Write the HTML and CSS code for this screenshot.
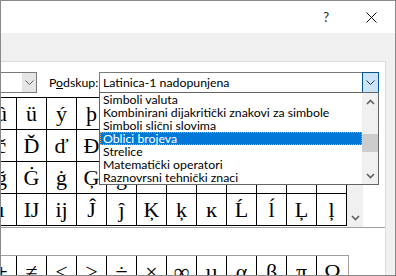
FILE: index.html
```html
<!DOCTYPE html>
<html lang="hr">
<head>
    <meta charset="UTF-8">
    <meta name="viewport" content="width=device-width, initial-scale=1.0">
    <title>Simbol</title>
    <link rel="stylesheet" href="styles.css">
</head>
<body>

<div class="window">
    <div class="titlebar">
        <span class="help">?</span>
        <span class="close">
            <svg width="11" height="11" viewBox="0 0 11 11"><path d="M0.5 0.5 L10.5 10.5 M10.5 0.5 L0.5 10.5" stroke="#111" stroke-width="1" fill="none"/></svg>
        </span>
    </div>

    <div class="content">
        <div class="panel">
            <div class="toolbar">
                <div class="font-combo">
                    <span class="font-btn">
                        <svg width="9" height="5" viewBox="0 0 9 5"><polyline points="0.5,0.5 4.5,4.5 8.5,0.5" stroke="#606060" stroke-width="1" fill="none"/></svg>
                    </span>
                </div>
                <label class="subset-label">P<u>o</u>dskup:</label>
                <div class="subset">
                    <div class="subset-combo">
                        <span class="subset-value">Latinica-1 nadopunjena</span>
                        <span class="subset-btn">
                            <svg width="9" height="5" viewBox="0 0 9 5"><polyline points="0.5,0.5 4.5,4.5 8.5,0.5" stroke="#303030" stroke-width="1" fill="none"/></svg>
                        </span>
                    </div>
                    <div class="subset-list">
                        <ul class="items">
                            <li>Simboli valuta</li>
                            <li>Kombinirani dijakritički znakovi za simbole</li>
                            <li>Simboli slični slovima</li>
                            <li class="selected">Oblici brojeva</li>
                            <li>Strelice</li>
                            <li>Matematički operatori</li>
                            <li>Raznovrsni tehnički znaci</li>
                        </ul>
                        <div class="list-scroll">
                            <span class="arrow">
                                <svg width="9" height="6" viewBox="0 0 9 6"><polyline points="1,5 4.5,1.5 8,5" stroke="#606060" stroke-width="1.6" fill="none"/></svg>
                            </span>
                            <span class="track"><span class="thumb"></span></span>
                            <span class="arrow">
                                <svg width="9" height="6" viewBox="0 0 9 6"><polyline points="1,1 4.5,4.5 8,1" stroke="#606060" stroke-width="1.6" fill="none"/></svg>
                            </span>
                        </div>
                    </div>
                </div>
            </div>

            <div class="chars">
                <div class="char-grid">
                    <span>û</span><span>ü</span><span>ý</span><span>þ</span><span>ÿ</span><span>Ā</span>
                    <span>ā</span><span>Ă</span><span>ă</span><span>Ą</span><span>ą</span><span>Ć</span>
                    <span>č</span><span>Ď</span><span>ď</span><span>Đ</span><span>đ</span><span>Ē</span>
                    <span>ē</span><span>Ĕ</span><span>ĕ</span><span>Ė</span><span>ė</span><span>Ę</span>
                    <span>ğ</span><span>Ġ</span><span>ġ</span><span>Ģ</span><span>ģ</span><span>Ĥ</span>
                    <span>ĥ</span><span>Ħ</span><span>ħ</span><span>Ĩ</span><span>ĩ</span><span>Ī</span>
                    <span>ı</span><span>Ĳ</span><span>ĳ</span><span>Ĵ</span><span>ĵ</span><span>Ķ</span>
                    <span>ķ</span><span>ĸ</span><span>Ĺ</span><span>ĺ</span><span>Ļ</span><span>ļ</span>
                </div>
                <div class="grid-scroll">
                    <svg width="9" height="6" viewBox="0 0 9 6"><polyline points="1,1 4.5,4.5 8,1" stroke="#606060" stroke-width="1.6" fill="none"/></svg>
                </div>
            </div>

            <div class="recent">
                <span>±</span><span>≠</span><span>≤</span><span>≥</span><span>÷</span><span>×</span>
                <span>∞</span><span>µ</span><span>α</span><span>β</span><span>π</span><span>Ω</span>
            </div>
        </div>
    </div>
</div>

</body>
</html>
```

FILE: styles.css
```css
body {
    margin: 0;
    background-color: #ffffff;
    font-family: Lato, "Noto Sans", sans-serif;
    font-size: 12.3px;
    color: #000;
}

.window {
    width: 396px;
    height: 276px;
    box-sizing: border-box;
    border: 1px solid #8a8a8a;
    overflow: hidden;
    display: flex;
    flex-direction: column;
}

.titlebar {
    height: 32px;
    flex-shrink: 0;
    background-color: #fff;
    display: flex;
    align-items: center;
    justify-content: flex-end;
}

.help {
    font-size: 13px;
    color: #222;
    margin-right: 37px;
    padding-bottom: 1px;
}

.close {
    display: flex;
    margin-right: 18px;
}

.content {
    flex: 1;
    background-color: #f0f0f0;
    padding-top: 28px;
}

.panel {
    height: 100%;
    margin-right: 9px;
    background-color: #fff;
    border-top: 1px solid #dcdcdc;
    border-right: 1px solid #dcdcdc;
}

.toolbar {
    display: flex;
    align-items: center;
    padding-top: 10px;
    margin-bottom: 4px;
}

.font-combo {
    width: 61px;
    height: 21px;
    box-sizing: border-box;
    margin-left: -25px;
    border: 1px solid #7a7a7a;
    display: flex;
    justify-content: flex-end;
}

.font-btn {
    width: 14px;
    background-color: #e5e5e5;
    display: flex;
    align-items: center;
    justify-content: center;
}

.subset-label {
    width: 50px;
    margin-left: 12px;
    white-space: nowrap;
}

.subset {
    position: relative;
    width: 280px;
}

.subset-combo {
    height: 21px;
    box-sizing: border-box;
    border: 1px solid #7a7a7a;
    display: flex;
    align-items: center;
}

.subset-value {
    flex: 1;
    padding-left: 3px;
}

.subset-btn {
    width: 17px;
    height: 21px;
    box-sizing: border-box;
    margin: -1px -1px -1px 0;
    background-color: #cce4f7;
    border: 1px solid #005499;
    display: flex;
    align-items: center;
    justify-content: center;
}

.subset-list {
    position: absolute;
    top: 20px;
    left: 0;
    width: 280px;
    height: 93px;
    box-sizing: border-box;
    border: 1px solid #646464;
    background-color: #fff;
    display: flex;
}

.items {
    flex: 1;
    list-style: none;
    margin: 0;
    padding: 0;
}

.items li {
    height: 13px;
    line-height: 13px;
    padding-left: 3px;
    white-space: nowrap;
}

.items li.selected {
    background-color: #0078d7;
    color: #fff;
    outline: 1px dotted #f5a040;
    outline-offset: -1px;
}

.list-scroll {
    width: 16px;
    background-color: #f0f0f0;
    display: flex;
    flex-direction: column;
}

.arrow {
    height: 17px;
    display: flex;
    align-items: center;
    justify-content: center;
}

.track {
    flex: 1;
}

.thumb {
    display: block;
    height: 18px;
    margin-top: 24px;
    background-color: #cdcdcd;
}

.chars {
    display: flex;
    margin-left: -14px;
    border-bottom: 1px solid #a0a0a0;
}

.char-grid {
    display: grid;
    grid-template-columns: repeat(12, 30px);
    border-top: 1px solid #000;
    margin-bottom: 1px;
}

.char-grid span, .recent span {
    height: 32px;
    box-sizing: border-box;
    border-right: 1px solid #000;
    border-bottom: 1px solid #000;
    font-family: "Liberation Serif", serif;
    font-size: 22px;
    line-height: 31px;
    text-align: center;
}

.grid-scroll {
    width: 16px;
    background-color: #f0f0f0;
    display: flex;
    align-items: flex-end;
    justify-content: center;
    padding-bottom: 6px;
    box-sizing: border-box;
}

.recent {
    display: grid;
    grid-template-columns: repeat(11, 30px) 31px;
    width: max-content;
    margin-left: -14px;
    margin-top: 27px;
    border-top: 1px solid #a0a0a0;
    border-right: 1px solid #a0a0a0;
}

.recent span {
    border-bottom: none;
}

.recent span:last-child {
    border-right: none;
}
```
